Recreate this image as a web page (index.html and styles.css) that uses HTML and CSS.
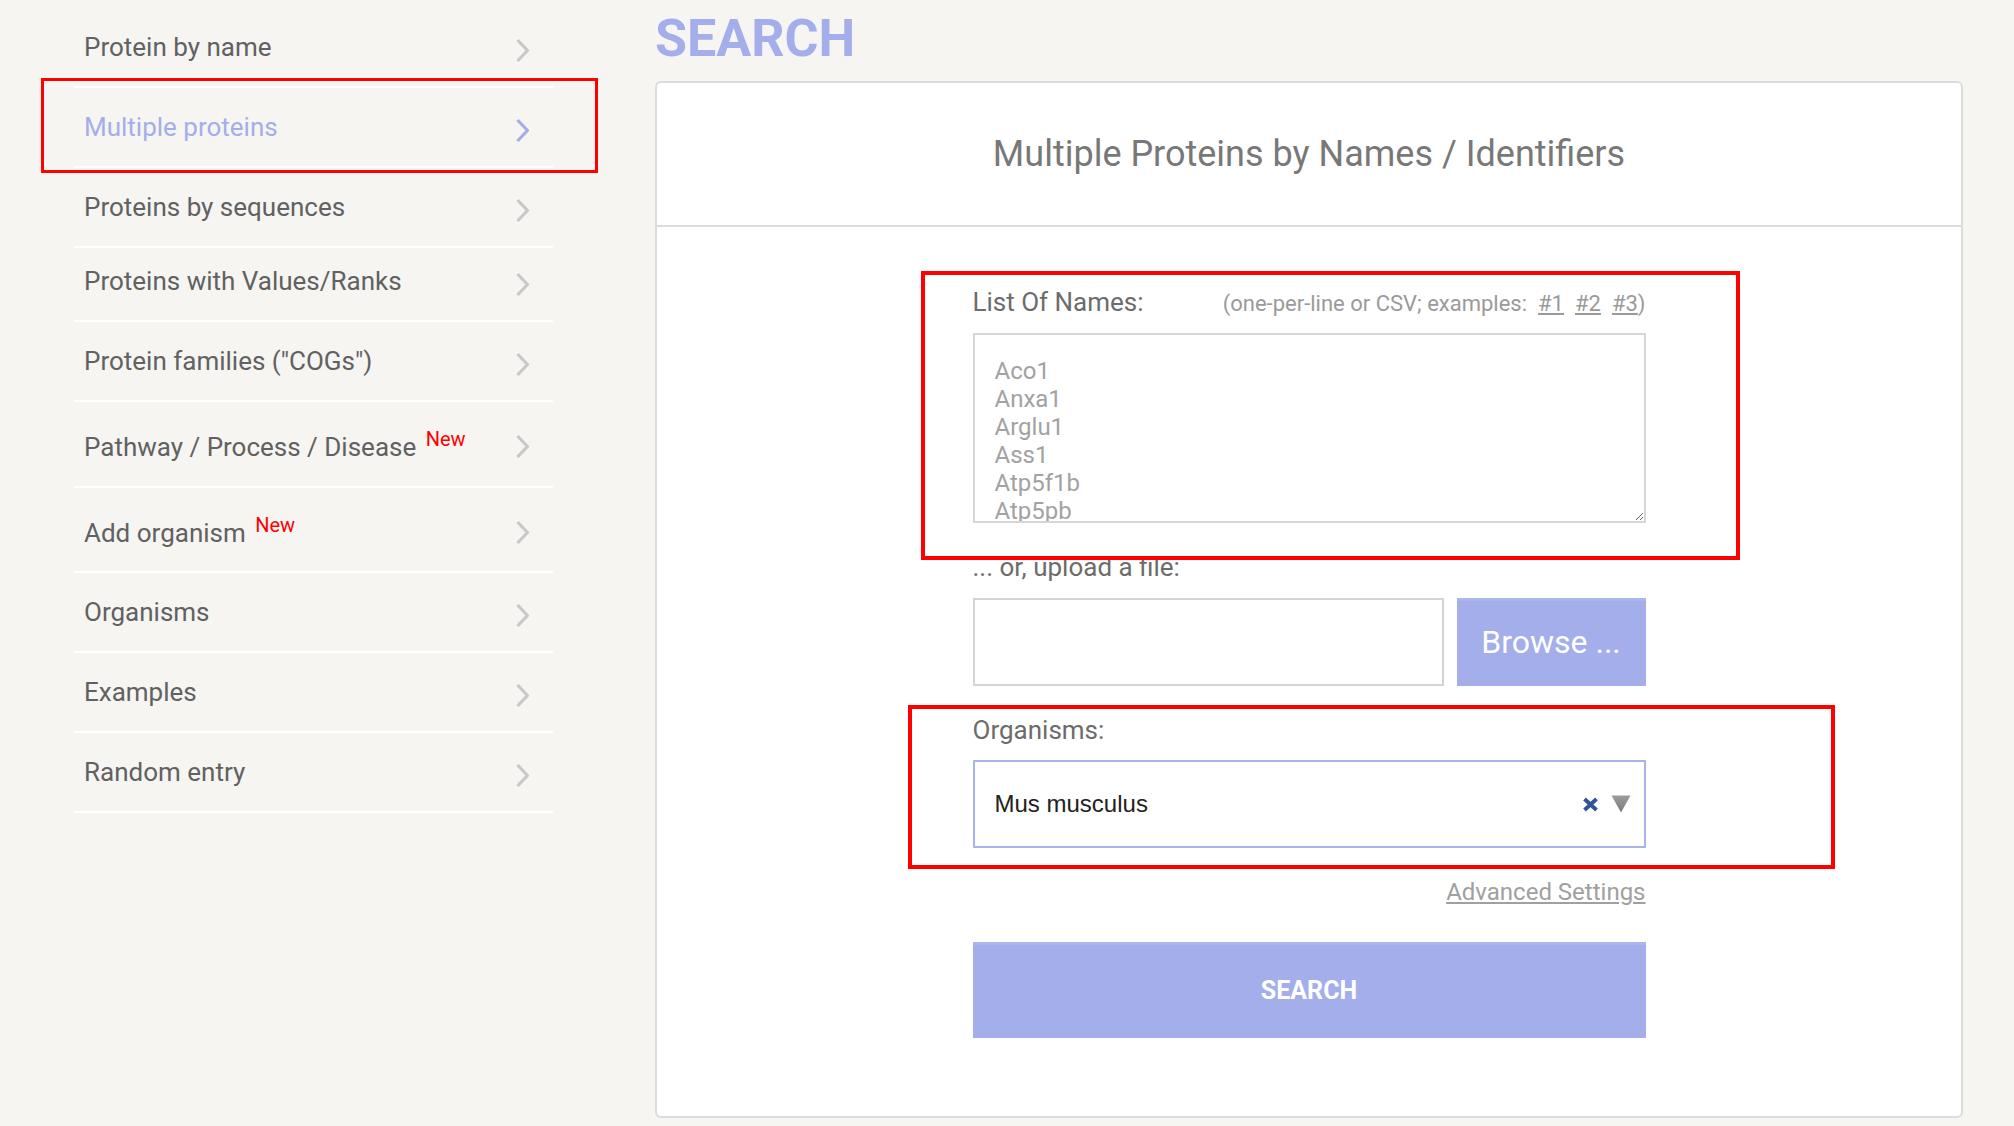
FILE: index.html
```html
<!DOCTYPE html>
<html lang="en">
<head>
<meta charset="utf-8">
<title>Search – Multiple proteins</title>
<link rel="stylesheet" href="styles.css">
</head>
<body>
<div class="layout">
  <nav class="sidebar">
    <ul class="menu">
      <li class="menu-item"><a class="menu-link" href="#"><span class="menu-text">Protein by name</span><svg class="chev" viewBox="0 0 15 25" aria-hidden="true"><path d="M2.5 2 12.5 12.5 2.5 23"/></svg></a></li>
      <li class="menu-item active"><a class="menu-link" href="#"><span class="menu-text">Multiple proteins</span><svg class="chev" viewBox="0 0 15 25" aria-hidden="true"><path d="M2.5 2 12.5 12.5 2.5 23"/></svg></a><span class="annot annot-nav"></span></li>
      <li class="menu-item"><a class="menu-link" href="#"><span class="menu-text">Proteins by sequences</span><svg class="chev" viewBox="0 0 15 25" aria-hidden="true"><path d="M2.5 2 12.5 12.5 2.5 23"/></svg></a></li>
      <li class="menu-item tight"><a class="menu-link" href="#"><span class="menu-text">Proteins with Values/Ranks</span><svg class="chev" viewBox="0 0 15 25" aria-hidden="true"><path d="M2.5 2 12.5 12.5 2.5 23"/></svg></a></li>
      <li class="menu-item"><a class="menu-link" href="#"><span class="menu-text">Protein families ("COGs")</span><svg class="chev" viewBox="0 0 15 25" aria-hidden="true"><path d="M2.5 2 12.5 12.5 2.5 23"/></svg></a></li>
      <li class="menu-item"><a class="menu-link" href="#"><span class="menu-text">Pathway / Process / Disease <sup class="new">New</sup></span><svg class="chev" viewBox="0 0 15 25" aria-hidden="true"><path d="M2.5 2 12.5 12.5 2.5 23"/></svg></a></li>
      <li class="menu-item"><a class="menu-link" href="#"><span class="menu-text">Add organism <sup class="new">New</sup></span><svg class="chev" viewBox="0 0 15 25" aria-hidden="true"><path d="M2.5 2 12.5 12.5 2.5 23"/></svg></a></li>
      <li class="menu-item"><a class="menu-link" href="#"><span class="menu-text">Organisms</span><svg class="chev" viewBox="0 0 15 25" aria-hidden="true"><path d="M2.5 2 12.5 12.5 2.5 23"/></svg></a></li>
      <li class="menu-item"><a class="menu-link" href="#"><span class="menu-text">Examples</span><svg class="chev" viewBox="0 0 15 25" aria-hidden="true"><path d="M2.5 2 12.5 12.5 2.5 23"/></svg></a></li>
      <li class="menu-item"><a class="menu-link" href="#"><span class="menu-text">Random entry</span><svg class="chev" viewBox="0 0 15 25" aria-hidden="true"><path d="M2.5 2 12.5 12.5 2.5 23"/></svg></a></li>
    </ul>
  </nav>

  <main class="main">
    <h1 class="page-title">SEARCH</h1>
    <section class="card">
      <header class="card-header">
        <h2 class="card-title">Multiple Proteins by Names / Identifiers</h2>
      </header>
      <form class="card-body" onsubmit="return false">
        <div class="form">
          <div class="group">
            <div class="label-row">
              <label class="field-label" for="names">List Of Names:</label>
              <span class="hint">(one-per-line or CSV; examples:<a href="#">#1</a><a href="#">#2</a><a href="#">#3</a>)</span>
            </div>
            <textarea id="names" class="names" placeholder="Aco1&#10;Anxa1&#10;Arglu1&#10;Ass1&#10;Atp5f1b&#10;Atp5pb&#10;Cat&#10;Cs&#10;Eno1"></textarea>
            <span class="annot annot-names"></span>
          </div>

          <div class="field-label upload-label">... or, upload a file:</div>
          <div class="upload-row">
            <input class="file-name" type="text" readonly aria-label="file name">
            <button type="button" class="btn browse">Browse ...</button>
          </div>

          <div class="group group-org">
            <div class="field-label">Organisms:</div>
            <div class="select">
              <span class="select-value">Mus musculus</span>
              <span class="select-icons">
                <svg class="clear" viewBox="0 0 17 15" aria-hidden="true"><path d="M2.5 2 14.5 13 M14.5 2 2.5 13"/></svg>
                <svg class="caret" viewBox="0 0 20 18" aria-hidden="true">
                  <defs><linearGradient id="cg" x1="0" y1="0" x2="0" y2="1"><stop offset="0" stop-color="#9d9d9d"/><stop offset="1" stop-color="#7a7a7a"/></linearGradient></defs>
                  <path d="M0.5 0.5H19.5L10 17.5Z" fill="url(#cg)"/>
                </svg>
              </span>
            </div>
            <span class="annot annot-org"></span>
          </div>

          <div class="advanced"><a href="#">Advanced Settings</a></div>
          <button type="submit" class="btn search-btn">SEARCH</button>
        </div>
      </form>
    </section>
  </main>
</div>
</body>
</html>
```

FILE: styles.css
```css
* {
  box-sizing: border-box;
}

html,
body {
  margin: 0;
  padding: 0;
}

body {
  background: #f6f5f2;
  font-family: Roboto, "Liberation Sans", Arial, sans-serif;
  color: #616161;
}

.layout {
  display: flex;
  align-items: flex-start;
  gap: 102px;
  padding-left: 74px;
}

/* ---------- sidebar ---------- */
.sidebar {
  flex: none;
  width: 479px;
  padding-top: 8px;
}

.menu {
  list-style: none;
  margin: 0;
  padding: 0;
}

.menu-item {
  position: relative;
  border-bottom: 2px solid #ffffff;
}

.menu-link {
  display: flex;
  align-items: center;
  justify-content: space-between;
  padding: 24px 23px 24px 10px;
  font-size: 26px;
  line-height: 30px;
  color: #616161;
  text-decoration: none;
}

.menu-item.tight .menu-link {
  padding-top: 18px;
}

.menu-item.active .menu-link {
  color: #a3aeeb;
}

.chev {
  flex: none;
  position: relative;
  top: 3px;
  width: 15px;
  height: 25px;
  color: #c8c8c8;
}

.chev path {
  fill: none;
  stroke: currentColor;
  stroke-width: 3.2;
  stroke-linejoin: round;
}

.menu-item.active .chev {
  color: #a3aeeb;
}

.new {
  font-size: 20px;
  line-height: 26px;
  color: #ff0000;
  margin-left: 3px;
}

/* ---------- annotation boxes ---------- */
.annot {
  position: absolute;
  border: 4px solid #ff0000;
  pointer-events: none;
}

.annot-nav {
  top: -10px;
  bottom: -7px;
  left: -33px;
  right: -45px;
  border-width: 3px;
}

.annot-names {
  top: -16px;
  bottom: -37px;
  left: -52px;
  right: -94px;
}

.annot-org {
  top: -10px;
  bottom: -21px;
  left: -65px;
  right: -189px;
}

/* ---------- main ---------- */
.main {
  flex: none;
  width: 1308px;
}

.page-title {
  margin: 0;
  padding-top: 9px;
  font-size: 52px;
  line-height: 60px;
  font-weight: 700;
  color: #a3aeeb;
}

.card {
  margin-top: 12px;
  background: #ffffff;
  border: 2px solid #dcdcdc;
  border-radius: 6px;
}

.card-header {
  padding: 50px 0;
  border-bottom: 2px solid #dcdcdc;
  text-align: center;
}

.card-title {
  margin: 0;
  font-size: 36px;
  line-height: 42px;
  font-weight: 400;
  color: #787878;
}

.card-body {
  margin: 0;
  padding: 60px 0 78px;
}

.form {
  width: 673px;
  margin: 0 auto;
}

.group {
  position: relative;
}

.label-row {
  display: flex;
  align-items: baseline;
  justify-content: space-between;
  height: 30px;
}

.field-label {
  font-size: 26px;
  line-height: 30px;
  color: #6c6c6c;
}

.hint {
  font-size: 22px;
  line-height: 26px;
  color: #9a9a9a;
}

.hint a {
  margin-left: 11px;
  color: inherit;
  text-decoration: underline;
}

.names {
  display: block;
  width: 100%;
  height: 190px;
  margin: 16px 0 0;
  padding: 22px 20px;
  border: 2px solid #d6d6d6;
  border-radius: 0;
  background: #ffffff;
  font-family: Roboto, "Liberation Sans", Arial, sans-serif;
  font-size: 24px;
  line-height: 28px;
  color: #555555;
  outline: none;
  resize: both;
}

.names::placeholder {
  color: #a2a2a2;
  opacity: 1;
}

.upload-label {
  margin-top: 29px;
}

.upload-row {
  display: flex;
  gap: 13px;
  height: 88px;
  margin-top: 16px;
}

.file-name {
  flex: 1;
  min-width: 0;
  height: 100%;
  margin: 0;
  border: 2px solid #d4d4d4;
  border-radius: 0;
  background: #ffffff;
  outline: none;
}

.btn {
  border: 0;
  border-radius: 0;
  background: #a3aeeb;
  color: #ffffff;
  font-family: Roboto, "Liberation Sans", Arial, sans-serif;
  box-shadow: inset 0 3px 0 #abb5ee;
  cursor: pointer;
}

.browse {
  flex: none;
  width: 189px;
  height: 100%;
  font-size: 32px;
  font-weight: 400;
}

.group-org {
  margin-top: 29px;
}

.select {
  display: flex;
  align-items: center;
  justify-content: space-between;
  height: 88px;
  margin-top: 15px;
  padding: 0 13px 0 20px;
  border: 2px solid #a9b3ec;
  background: #ffffff;
}

.select-value {
  font-family: "Liberation Sans", Arial, sans-serif;
  font-size: 24px;
  color: #222222;
}

.select-icons {
  display: flex;
  align-items: center;
  gap: 12px;
}

.clear {
  width: 17px;
  height: 15px;
  color: #2f5597;
}

.clear path {
  fill: none;
  stroke: currentColor;
  stroke-width: 3.8;
}

.caret {
  width: 20px;
  height: 18px;
}

.advanced {
  margin-top: 29px;
  text-align: right;
  font-size: 24px;
  line-height: 30px;
}

.advanced a {
  color: #a0a0a0;
  text-decoration: underline;
}

.search-btn {
  display: block;
  width: 100%;
  height: 96px;
  margin-top: 35px;
  font-size: 25px;
  font-weight: 700;
}
```
